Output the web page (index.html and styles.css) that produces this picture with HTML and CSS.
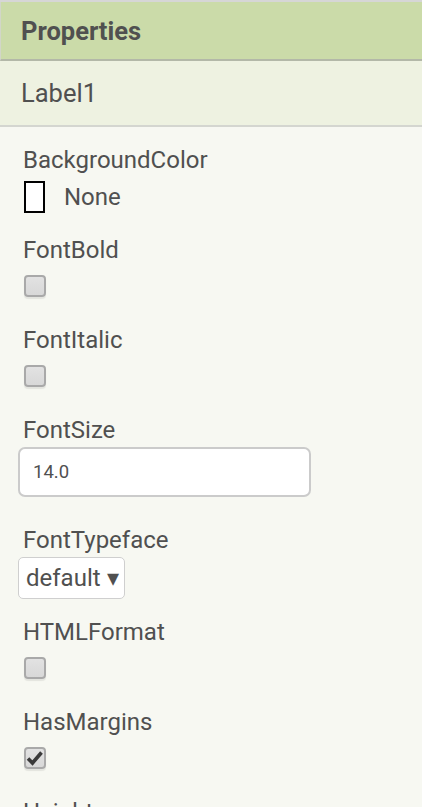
FILE: index.html
```html
<!DOCTYPE html>
<html>
<head>
<meta charset="utf-8">
<link rel="stylesheet" href="styles.css">
</head>
<body>
<div class="panel">
  <div class="header">Properties</div>
  <div class="component">Label1</div>
  <div class="props">
    <div class="prop swatch-prop">
      <div class="label">BackgroundColor</div>
      <div class="swatch-row"><span class="swatch"></span><span class="swatch-text">None</span></div>
    </div>
    <div class="prop">
      <div class="label">FontBold</div>
      <div class="check-row"><span class="check"></span></div>
    </div>
    <div class="prop">
      <div class="label">FontItalic</div>
      <div class="check-row"><span class="check"></span></div>
    </div>
    <div class="prop">
      <div class="label">FontSize</div>
      <div class="text-input">14.0</div>
    </div>
    <div class="prop">
      <div class="label">FontTypeface</div>
      <div class="select">default&nbsp;▾</div>
    </div>
    <div class="prop">
      <div class="label">HTMLFormat</div>
      <div class="check-row"><span class="check"></span></div>
    </div>
    <div class="prop">
      <div class="label">HasMargins</div>
      <div class="check-row"><span class="check checked"><svg viewBox="0 0 22 22" width="22" height="22"><path d="M4 11.5 L8.5 16 L17.5 5.5" fill="none" stroke="#3a3a3a" stroke-width="3.6" stroke-linecap="butt" stroke-linejoin="miter"/></svg></span></div>
    </div>
    <div class="prop">
      <div class="label">Height</div>
    </div>
  </div>
</div>
</body>
</html>
```
FILE: styles.css
```css
html, body {
  margin: 0;
  padding: 0;
  background: #f7f8f2;
  overflow: hidden;
}
.panel {
  font-family: Roboto, "Noto Sans", sans-serif;
  color: #505050;
  border-top: 2px solid #d6d6d6;
  width: 422px;
  height: 805px;
  overflow: hidden;
}
.header {
  background: #cbdba9;
  border-left: 1px solid #d2d6c8;
  border-bottom: 2px solid #b3b8a8;
  height: 59px;
  box-sizing: border-box;
  padding-left: 20px;
  display: flex;
  align-items: center;
  font-weight: bold;
  font-size: 25.5px;
  color: #505050;
}
.component {
  background: #eef2e1;
  border-bottom: 2px solid #d4d6d0;
  height: 66px;
  box-sizing: border-box;
  padding-left: 21px;
  display: flex;
  align-items: center;
  font-size: 25.5px;
}
.props {
  padding: 16px 0 0 23px;
}
.prop {
  padding-bottom: 16px;
}
.label {
  height: 34px;
  line-height: 34px;
  font-size: 24px;
}
.swatch-row {
  display: flex;
  align-items: center;
  padding: 4px 0;
  margin-left: 1px;
}
.swatch {
  width: 21px;
  height: 32px;
  box-sizing: border-box;
  border: 2px solid #000;
  background: #fff;
}
.swatch-text {
  margin-left: 19px;
  font-size: 24px;
}
.check-row {
  padding: 8px 0 10px 1px;
  height: 22px;
}
.check {
  display: block;
  width: 22px;
  height: 22px;
  box-sizing: border-box;
  border: 2px solid #a9a9a9;
  border-radius: 4px;
  background: linear-gradient(#e2e2e2, #d8d8d8);
  box-shadow: 0 2px 1px rgba(0, 0, 0, 0.08);
  position: relative;
}
.check svg {
  position: absolute;
  left: -2px;
  top: -2px;
}
.text-input {
  margin-left: -5px;
  width: 293px;
  height: 50px;
  box-sizing: border-box;
  border: 2px solid #cbcbcb;
  border-radius: 7px;
  background: #fff;
  padding-left: 13px;
  display: flex;
  align-items: center;
  font-size: 18.5px;
  margin-bottom: 10px;
}
.select {
  margin-left: -5px;
  width: 107px;
  height: 42px;
  box-sizing: border-box;
  border: 1px solid #cfcfcf;
  border-radius: 5px;
  background: #fff;
  padding-left: 7px;
  display: flex;
  align-items: center;
  font-size: 24px;
  white-space: nowrap;
  overflow: hidden;
}
```
